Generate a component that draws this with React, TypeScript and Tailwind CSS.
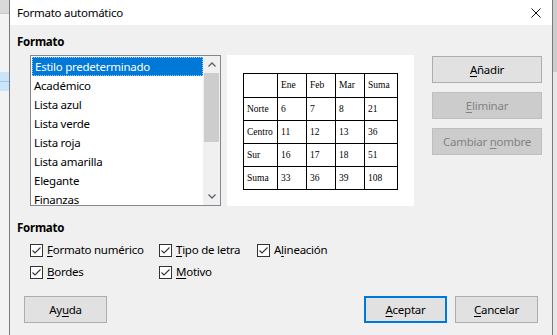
import React from 'react'

const FONT = { fontFamily: '"Noto Sans", "Open Sans", sans-serif', letterSpacing: '-0.25px' }

const STYLES = [
  'Estilo predeterminado',
  'Académico',
  'Lista azul',
  'Lista verde',
  'Lista roja',
  'Lista amarilla',
  'Elegante',
  'Finanzas',
]

const TABLE = [
  ['', 'Ene', 'Feb', 'Mar', 'Suma'],
  ['Norte', '6', '7', '8', '21'],
  ['Centro', '11', '12', '13', '36'],
  ['Sur', '16', '17', '18', '51'],
  ['Suma', '33', '36', '39', '108'],
]
const COL_W = ['w-[33px]', 'w-[29px]', 'w-[29px]', 'w-[29px]', 'w-[33px]']

// label with an underlined mnemonic letter
function Mn({ pre = '', u, post }: { pre?: string; u: string; post: string }) {
  return (
    <span>
      {pre}
      <span className="underline underline-offset-2">{u}</span>
      {post}
    </span>
  )
}

function Check() {
  return (
    <svg width="13" height="13" viewBox="0 0 13 13" className="shrink-0">
      <rect x="0.5" y="0.5" width="12" height="12" fill="#fff" stroke="#333" />
      <polyline points="2.5,6.5 5,9 10.5,3.5" fill="none" stroke="#333" strokeWidth="1.1" />
    </svg>
  )
}

function Btn({ children, disabled, primary, className = '' }: { children: React.ReactNode; disabled?: boolean; primary?: boolean; className?: string }) {
  return (
    <div
      className={`flex items-center justify-center text-[11.5px] ${
        disabled
          ? 'border border-[#bfbfbf] bg-[#cccccc] text-[#838383]'
          : primary
          ? 'border-2 border-[#0078d7] bg-[#e1e1e1] text-black'
          : 'border border-[#adadad] bg-[#e1e1e1] text-black'
      } ${className}`}
    >
      {children}
    </div>
  )
}

export default function App() {
  return (
    <div className="flex h-[335px] w-[557px] overflow-hidden bg-[#f0f0f0]" style={FONT}>
      {/* background app, left */}
      <div className="flex w-[9px] flex-col">
        <div className="h-[13px] bg-[#d9d9d9]" />
        <div className="h-[1px] bg-[#c8c8c8]" />
        <div className="h-[58px] bg-[#f3f3f3]" />
        <div className="h-[9px] bg-[#cce4f7]" />
        <div className="h-[1px] bg-[#99c9ef]" />
        <div className="h-[9px] bg-[#cce4f7]" />
        <div className="flex-1 bg-[#f3f3f3]" />
      </div>

      {/* dialog */}
      <div className="flex w-[544px] flex-col border-x border-[#7a7a7a]">
        <div className="flex h-[25px] items-center justify-between bg-white pl-[7px] pr-[11px]">
          <span className="text-[11.5px] text-black">Formato automático</span>
          <svg width="10" height="10" viewBox="0 0 10 10">
            <path d="M0.5 0.5 L9.5 9.5 M9.5 0.5 L0.5 9.5" stroke="#111" strokeWidth="1" />
          </svg>
        </div>

        <div className="flex flex-1 flex-col bg-[#f0f0f0]">
          <div className="pl-[7px] pt-[9px] text-[11.5px] font-bold leading-[16px] text-black">Formato</div>

          <div className="mt-[5px] flex items-start">
            {/* style list */}
            <div className="ml-[20px] flex h-[151px] w-[191px] border border-[#828790] bg-white">
              <div className="flex flex-1 flex-col pl-[1px] pt-[1px]">
                {STYLES.map((s, i) => (
                  <div
                    key={s}
                    className={`flex h-[19px] shrink-0 items-center pl-[2px] text-[11.5px] ${
                      i === 0 ? 'border border-dotted border-[#99c9ef] bg-[#0078d7] text-white' : 'text-black'
                    }`}
                  >
                    {s}
                  </div>
                ))}
              </div>
              <div className="flex w-[17px] flex-col bg-[#f0f0f0]">
                <div className="flex h-[17px] items-center justify-center">
                  <svg width="8" height="5" viewBox="0 0 8 5">
                    <polyline points="0.5,4.5 4,1 7.5,4.5" fill="none" stroke="#606060" strokeWidth="1.3" />
                  </svg>
                </div>
                <div className="mx-[1px] h-[69px] bg-[#cdcdcd]" />
                <div className="flex-1" />
                <div className="flex h-[17px] items-center justify-center">
                  <svg width="8" height="5" viewBox="0 0 8 5">
                    <polyline points="0.5,0.5 4,4 7.5,0.5" fill="none" stroke="#606060" strokeWidth="1.3" />
                  </svg>
                </div>
              </div>
            </div>

            {/* preview */}
            <div className="ml-[6px] flex h-[151px] w-[187px] items-start justify-center bg-white pt-[18px]">
              <div
                className="border border-black text-[9.5px] text-black"
                style={{ fontFamily: '"Liberation Serif", "DejaVu Serif", serif', letterSpacing: 0 }}
              >
                {TABLE.map((row, r) => (
                  <div key={r} className={`flex h-[23px] ${r > 0 ? 'border-t border-black' : ''}`}>
                    {row.map((c, ci) => (
                      <div
                        key={ci}
                        className={`flex items-center pl-[3px] ${COL_W[ci]} ${ci > 0 ? 'border-l border-black' : ''}`}
                      >
                        {c}
                      </div>
                    ))}
                  </div>
                ))}
              </div>
            </div>

            {/* side buttons */}
            <div className="ml-[18px] flex w-[110px] flex-col gap-[9px] pt-[1px]">
              <Btn className="h-[27px]"><Mn u="A" post="ñadir" /></Btn>
              <Btn disabled className="h-[27px]"><Mn u="E" post="liminar" /></Btn>
              <Btn disabled className="h-[27px]"><Mn pre="Cambiar " u="n" post="ombre" /></Btn>
            </div>
          </div>

          <div className="mt-[14px] pl-[7px] text-[11.5px] font-bold leading-[16px] text-black">Formato</div>

          <div className="mt-[7px] ml-[20px] flex flex-col gap-[8px] text-[11.5px] text-black">
            <div className="flex h-[14px] items-center">
              <div className="flex w-[129px] items-center gap-[4px]"><Check /><Mn u="F" post="ormato numérico" /></div>
              <div className="flex w-[98px] items-center gap-[4px]"><Check /><Mn u="T" post="ipo de letra" /></div>
              <div className="flex items-center gap-[4px]"><Check /><Mn pre="A" u="l" post="ineación" /></div>
            </div>
            <div className="flex h-[14px] items-center">
              <div className="flex w-[129px] items-center gap-[4px]"><Check /><Mn u="B" post="ordes" /></div>
              <div className="flex items-center gap-[4px]"><Check /><Mn u="M" post="otivo" /></div>
            </div>
          </div>

          <div className="mt-[17px] flex items-center">
            <Btn className="ml-[14px] h-[27px] w-[83px]"><Mn pre="Ay" u="u" post="da" /></Btn>
            <div className="flex-1" />
            <Btn primary className="h-[27px] w-[83px]"><Mn u="A" post="ceptar" /></Btn>
            <Btn className="ml-[8px] mr-[14px] h-[27px] w-[83px]"><Mn u="C" post="ancelar" /></Btn>
          </div>
        </div>
      </div>

      {/* background app, right */}
      <div className="flex w-[4px] flex-col">
        <div className="h-[72px] bg-[#cdcdcd]" />
        <div className="flex-1 bg-[#e8e8e8]" />
      </div>
    </div>
  )
}
